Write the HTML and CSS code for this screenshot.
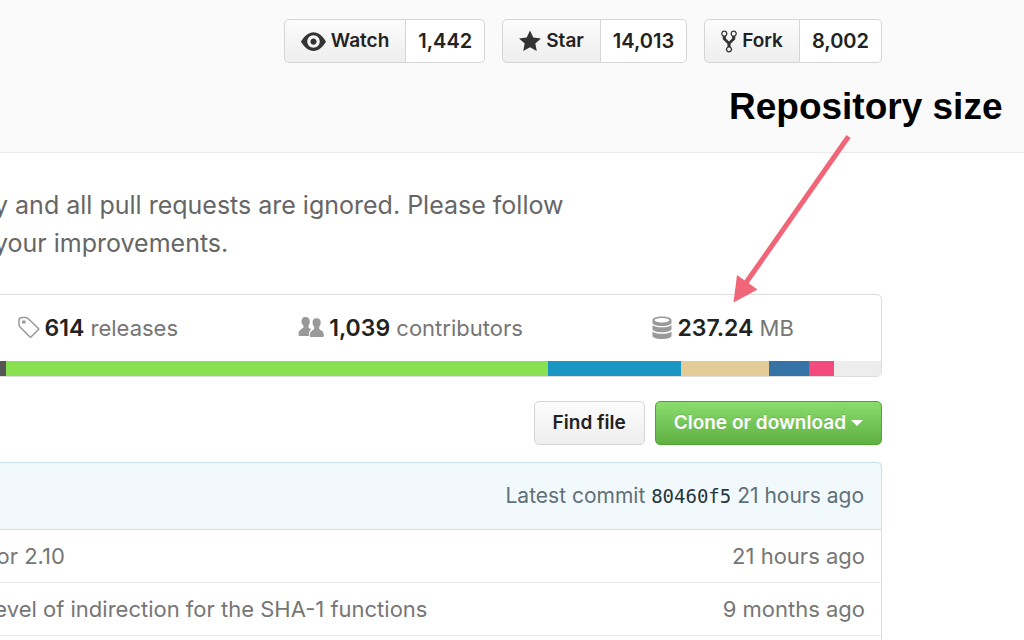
FILE: index.html
```html
<!DOCTYPE html>
<html lang="en">
<head>
<meta charset="utf-8">
<title>Repository size</title>
<link rel="stylesheet" href="styles.css">
</head>
<body>
<header class="repo-head">
  <div class="social">
    <button class="btn" type="button">
      <svg class="icon" width="25" height="25" viewBox="0 0 16 16" aria-hidden="true"><path fill-rule="evenodd" d="M8.06 2C3 2 0 8 0 8s3 6 8.06 6C13 14 16 8 16 8s-3-6-7.94-6zM8 12c-2.2 0-4-1.78-4-4 0-2.2 1.8-4 4-4 2.22 0 4 1.8 4 4 0 2.22-1.78 4-4 4zm2-4c0 1.11-.89 2-2 2-1.11 0-2-.89-2-2 0-1.11.89-2 2-2 1.11 0 2 .89 2 2z"/></svg>Watch</button>
    <a class="count" href="#watchers">1,442</a>
  </div>
  <div class="social">
    <button class="btn" type="button">
      <svg class="icon" width="22" height="25" viewBox="0 0 14 16" aria-hidden="true"><path d="M14 6l-4.9-.64L7 1 4.9 5.36 0 6l3.6 3.26L2.67 14 7 11.67 11.33 14l-.93-4.74z"/></svg>Star</button>
    <a class="count" href="#stargazers">14,013</a>
  </div>
  <div class="social">
    <button class="btn" type="button">
      <svg class="icon" width="16" height="25" viewBox="0 0 10 16" aria-hidden="true"><path fill-rule="evenodd" d="M8 1a1.993 1.993 0 0 0-1 3.72V6L5 8 3 6V4.72A1.993 1.993 0 0 0 2 1a1.993 1.993 0 0 0-1 3.72V6.5l3 3v1.78A1.993 1.993 0 0 0 5 15a1.993 1.993 0 0 0 1-3.72V9.5l3-3V4.72A1.993 1.993 0 0 0 8 1zM2 4.2C1.34 4.2.8 3.65.8 3c0-.65.55-1.2 1.2-1.2.65 0 1.2.55 1.2 1.2 0 .65-.55 1.2-1.2 1.2zm3 10c-.66 0-1.2-.55-1.2-1.2 0-.65.55-1.2 1.2-1.2.65 0 1.2.55 1.2 1.2 0 .65-.55 1.2-1.2 1.2zm3-10c-.66 0-1.2-.55-1.2-1.2 0-.65.55-1.2 1.2-1.2.65 0 1.2.55 1.2 1.2 0 .65-.55 1.2-1.2 1.2z"/></svg>Fork</button>
    <a class="count" href="#forks">8,002</a>
  </div>
</header>

<main class="repo">
  <p class="about">y and all pull requests are ignored. Please follow<br>your improvements.</p>

  <section class="summary">
    <ul class="stats">
      <li><a class="stat" href="#releases">
        <svg class="icon" width="22" height="24" viewBox="0 0 22 24" aria-hidden="true"><path class="outline" d="M1 4.500Q1 1.500 4 1.500H7.500Q9 1.500 10 2.500L20.500 12.500Q21 13 20.500 13.500L13 21Q12.500 21.500 12 21L2 11Q1 10 1 8.500z"/><path d="M4 4.500h3.500v3H4z"/></svg><span><b>614</b> releases</span></a></li>
      <li><a class="stat" href="#contributors">
        <svg class="icon" width="26" height="24" viewBox="0 0 26 24" aria-hidden="true"><path d="M7.500 1C10.500 1 12 3 11.800 6c-.1 2-.8 2.800-1.300 3.800v1.700c.5.900 1.700 1.200 2.700 1.700-1.500 1.100-2.200 2.500-2.200 4.600v2.200H1.500Q.3 20 .5 18c.2-4.500 3.500-4.800 5-6.500V9.800C4 8.500 3.600 7.500 3.500 6 3.200 3 4.500 1 7.500 1z"/><path d="M18.500 2.300c3 0 4.500 2 4.200 4.700-.1 2-.7 2.800-1.500 3.800V13c1.700 1.500 4.600 1.800 4.600 6.300 0 1.300-.2 1.700-1.200 1.700H13c-1 0-1.200-.5-1.200-1.500 0-4.500 3-5 4.400-6.500v-2.200c-.9-1-1.500-1.800-1.600-3.800-.3-2.700 1-4.700 3.900-4.700z"/></svg><span><b>1,039</b> contributors</span></a></li>
      <li><span class="stat">
        <svg class="icon" width="20" height="24" viewBox="0 0 20 24" aria-hidden="true"><path fill-rule="evenodd" d="M10 .5c6 0 9.500 1.700 9.500 3.500v2.700C19.500 8.500 16 10 10 10S.5 8.500.5 6.700V4C.5 2.200 4 .5 10 .5zm0 1.500C5.500 2 2.700 3 2.700 4.200S5.500 6.400 10 6.400s7.300-1 7.300-2.200S14.500 2 10 2z"/><path d="M.5 9c1.500 1.600 5 2.300 9.500 2.300s8-.7 9.500-2.300v4c0 1.800-3.500 3.300-9.500 3.300S.5 14.800.5 13zM.5 15.500c1.500 1.600 5 2.300 9.500 2.300s8-.7 9.500-2.300v4.300c0 1.900-3.500 3.200-9.500 3.200S.5 21.700.5 19.800z"/></svg><span><b>237.24</b> MB</span></span></li>
    </ul>
    <div class="langs">
      <span class="lang c"></span><span class="lang shell"></span><span class="lang perl"></span><span class="lang tcl"></span><span class="lang python"></span><span class="lang other"></span><span class="lang rest"></span>
    </div>
  </section>

  <div class="actions">
    <button class="btn" type="button">Find file</button>
    <button class="btn primary" type="button">Clone or download<span class="caret"></span></button>
  </div>

  <section class="files">
    <div class="commit"><span>Latest commit <a class="sha" href="#80460f5">80460f5</a> 21 hours ago</span></div>
    <table class="list">
      <tr><td>for 2.10</td><td class="age">21 hours ago</td></tr>
      <tr><td>level of indirection for the SHA-1 functions</td><td class="age">9 months ago</td></tr>
    </table>
  </section>
</main>

<div class="note">Repository size
  <svg class="arrow" width="130" height="172" viewBox="0 0 130 172" aria-hidden="true"><path class="shaft" d="M119.500 6.500L14 157"/><path class="tip" d="M4.500 172.500L8 145l20.500 14.500z"/></svg>
</div>
</body>
</html>
```
FILE: styles.css
```css
* { box-sizing: border-box; }
html { height: 100%; overflow: hidden; }
body {
  display: flex;
  flex-direction: column;
  margin: 0;
  height: 100%;
  overflow: hidden;
  position: relative;
  background: #fff;
  color: #767676;
  font: 22px/32px Inter, "Noto Sans", sans-serif;
}
a { color: inherit; text-decoration: none; }
.icon { flex: none; fill: currentColor; }

.repo-head {
  display: flex;
  justify-content: flex-end;
  gap: 17px;
  padding: 19px 142px 89px 0;
  background: #fafafa;
  border-bottom: 1px solid #eaeaea;
}
.social { display: flex; }
.btn, .count {
  display: flex;
  align-items: center;
  height: 44px;
  border: 1px solid #d5d5d5;
  border-radius: 5px;
  color: #222;
  font: 600 19px/28px Inter, "Noto Sans", sans-serif;
}
.btn {
  gap: 5px;
  padding: 0 18px;
  background: linear-gradient(#fcfcfc, #eee);
}
.btn .icon { color: #333; }
.social .btn { padding: 0 16px; border-radius: 5px 0 0 5px; }
.count {
  padding: 0 12px;
  border-left: 0;
  border-radius: 0 5px 5px 0;
  background: #fff;
  font-size: 20px;
}

.repo {
  flex: 1;
  display: flex;
  flex-direction: column;
  margin: 0 142px 0 -58px;
}
.about {
  margin: 0;
  padding: 33px 0 32px 52px;
  color: #666;
  font-size: 25px;
  line-height: 38px;
}
.summary {
  border: 1px solid #ddd;
  border-radius: 5px;
  overflow: hidden;
}
.stats {
  display: grid;
  grid-template-columns: repeat(3, 1fr);
  margin: 0;
  padding: 17px 0;
  list-style: none;
}
.stat { display: flex; justify-content: center; align-items: center; gap: 5px; padding-right: 3px; }
.stat .icon { color: #999; }
.stat b { color: #222; font-size: 23px; font-weight: 600; }
.outline { fill: none; stroke: currentColor; stroke-width: 1.5; }

.langs { display: flex; height: 15px; }
.c { flex: 63; background: #555; }
.shell { flex: 542; background: #89e051; }
.perl { flex: 133; background: #1997c2; }
.tcl { flex: 88; background: #e4cc98; }
.python { flex: 40; background: #3572a5; }
.other { flex: 25; background: #f34b7d; }
.rest { flex: 47; background: #ededed; }

.actions { display: flex; justify-content: flex-end; gap: 10px; padding: 24px 0 17px; }
.primary {
  background: linear-gradient(#8add6d, #60b044);
  border-color: #4fa62c;
  color: #fff;
  text-shadow: 0 -1px 0 rgba(0, 0, 0, 0.15);
}
.caret {
  border: 6px solid transparent;
  border-top-color: #fff;
  border-bottom: 0;
}

.files {
  flex: 1;
  border: 1px solid #ddd;
  border-bottom: 0;
  border-radius: 5px 5px 0 0;
}
.commit {
  display: flex;
  justify-content: flex-end;
  margin: -1px -1px 0;
  padding: 17px 17px 17px 0;
  border: 1px solid #c5e2ef;
  border-radius: 5px 5px 0 0;
  background: #f2f9fc;
  color: #5f7078;
  font-size: 21px;
}
.sha { color: #26353b; font: 19px/32px "DejaVu Sans Mono", monospace; }
.list { width: 100%; border-spacing: 0; }
.list td { height: 53px; padding: 0 0 0 46px; border-bottom: 1px solid #eaeaea; }
.list td.age { padding: 0 16px 0 0; text-align: right; }

.note {
  position: absolute;
  top: 86px;
  left: 729px;
  color: #000;
  font: bold 37px/42px "Liberation Sans", Arial, sans-serif;
  white-space: nowrap;
}
.arrow { position: absolute; top: 44px; left: 0; overflow: visible; }
.shaft { fill: none; stroke: #f06577; stroke-width: 5; }
.tip { fill: #f06577; }
```
